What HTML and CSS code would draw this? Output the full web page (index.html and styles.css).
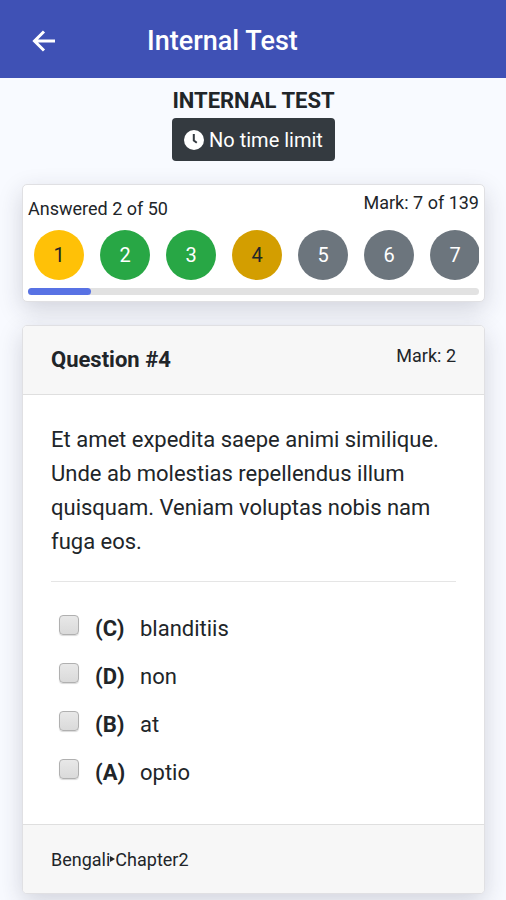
FILE: index.html
```html
<!DOCTYPE html>
<html lang="en">
<head>
<meta charset="utf-8">
<meta name="viewport" content="width=device-width, initial-scale=1">
<title>Internal Test</title>
<link rel="stylesheet" href="styles.css">
</head>
<body>
<header class="app-bar">
  <button class="back" type="button" aria-label="Back">
    <svg viewBox="0 0 24 22" width="24" height="22" fill="none" stroke="currentColor" stroke-width="3"><path d="M23 11H3M12 1.5L2.5 11l9.500 9.500"/></svg>
  </button>
  <h1 class="app-title">Internal Test</h1>
</header>
<main class="page">
  <section class="intro">
    <h2 class="test-name">INTERNAL TEST</h2>
    <span class="badge">
      <svg viewBox="0 0 20 20" width="20" height="20" aria-hidden="true"><circle cx="10" cy="10" r="10" fill="#fff"/><path d="M9.800 4v6.500l3 2.200" fill="none" stroke="#343a40" stroke-width="2"/></svg>
      <span>No time limit</span>
    </span>
  </section>

  <section class="card status">
    <div class="summary">
      <span class="answered">Answered 2 of 50</span>
      <span class="mark">Mark: 7 of 139</span>
    </div>
    <nav class="steps" aria-label="Questions">
      <button class="step flagged" type="button">1</button>
      <button class="step done" type="button">2</button>
      <button class="step done" type="button">3</button>
      <button class="step current" type="button">4</button>
      <button class="step" type="button">5</button>
      <button class="step" type="button">6</button>
      <button class="step" type="button">7</button>
    </nav>
    <div class="track"><div class="fill"></div></div>
  </section>

  <section class="card question">
    <header class="question-head">
      <h3 class="question-title">Question #4</h3>
      <span class="mark">Mark: 2</span>
    </header>
    <div class="question-body">
      <p class="prompt">Et amet expedita saepe animi similique. Unde ab molestias repellendus illum quisquam. Veniam voluptas nobis nam fuga eos.</p>
      <hr class="rule">
      <div class="options">
        <label class="option"><input class="tick" type="checkbox"><b class="letter">(C)</b><span>blanditiis</span></label>
        <label class="option"><input class="tick" type="checkbox"><b class="letter">(D)</b><span>non</span></label>
        <label class="option"><input class="tick" type="checkbox"><b class="letter">(B)</b><span>at</span></label>
        <label class="option"><input class="tick" type="checkbox"><b class="letter">(A)</b><span>optio</span></label>
      </div>
    </div>
    <footer class="question-foot">Bengali<svg class="caret" viewBox="0 0 5 6" width="5" height="6" aria-hidden="true"><path d="M0 0l5 3-5 3z" fill="#212529"/></svg>Chapter2</footer>
  </section>
</main>
</body>
</html>
```
FILE: styles.css
```css
* {
  box-sizing: border-box;
}

body {
  margin: 0;
  background: #f8faff;
  color: #212529;
  font-family: Roboto, "Liberation Sans", sans-serif;
  font-size: 22px;
}

h1, h2, h3, p {
  margin: 0;
}

button {
  border: 0;
  padding: 0;
  font: inherit;
}

.app-bar {
  display: flex;
  align-items: center;
  height: 78px;
  padding: 4px 32px 0;
  background: #3f51b5;
  color: #fff;
}

.back {
  display: flex;
  width: 115px;
  background: none;
  color: #fff;
}

.app-title {
  font-size: 27px;
  font-weight: 500;
}

.page {
  padding: 8px 21px 7px 22px;
}

.intro {
  display: flex;
  flex-direction: column;
  align-items: center;
  margin-bottom: 23px;
}

.test-name {
  font-size: 22px;
  line-height: 30px;
  font-weight: 700;
  margin-bottom: 2px;
}

.badge {
  display: flex;
  align-items: center;
  gap: 5px;
  height: 43px;
  padding: 0 12px;
  border-radius: 4px;
  background: #343a40;
  color: #fff;
  font-size: 20px;
}

.card {
  border: 1px solid #e0e0e3;
  border-radius: 5px;
  background: #fff;
  box-shadow: 0 8px 24px rgba(40, 40, 60, 0.18);
}

.status {
  padding: 6px 5px 6px;
  margin-bottom: 23px;
}

.summary {
  display: flex;
  justify-content: space-between;
  height: 39px;
}

.answered,
.mark {
  font-size: 18px;
  line-height: 24px;
}

.answered {
  padding-top: 6px;
}

.steps {
  display: flex;
  gap: 16px;
  padding-left: 6px;
  margin-bottom: 8px;
  overflow: hidden;
}

.step {
  flex: none;
  width: 50px;
  height: 50px;
  border-radius: 50%;
  background: #6c757d;
  color: #fff;
  font-size: 20px;
}

.flagged {
  background: #ffc107;
  color: #212529;
}

.done {
  background: #28a745;
}

.current {
  background: #d39e00;
  color: #212529;
}

.track {
  height: 7px;
  border-radius: 4px;
  background: #e2e2e2;
}

.fill {
  width: 14%;
  height: 7px;
  border-radius: 4px;
  background: #5872e4;
}

.question {
  overflow: hidden;
}

.question-head {
  display: flex;
  justify-content: space-between;
  height: 69px;
  padding: 18px 28px;
  border-bottom: 1px solid #dfdfdf;
  background: #f7f7f7;
}

.question-title {
  font-size: 22px;
  line-height: 32px;
  font-weight: 700;
}

.question-body {
  padding: 28px 28px 28px;
}

.prompt {
  font-size: 22px;
  line-height: 34px;
}

.rule {
  margin: 22px 0;
  border: 0;
  border-top: 1px solid #e5e5e5;
}

.option {
  display: flex;
  align-items: center;
  height: 48px;
}

.tick {
  appearance: none;
  width: 20px;
  height: 20px;
  margin: 0 16px 6px 8px;
  border: 1px solid #b0b0b0;
  border-radius: 4px;
  background: linear-gradient(#e8e8e8, #dadada);
  box-shadow: 0 1px 1px rgba(0, 0, 0, 0.15);
}

.tick:checked {
  background: #3f51b5;
}

.letter {
  width: 45px;
  font-weight: 700;
}

.question-foot {
  display: flex;
  align-items: center;
  height: 69px;
  padding: 0 28px;
  border-top: 1px solid #dfdfdf;
  background: #f7f7f7;
  font-size: 18px;
}
```
